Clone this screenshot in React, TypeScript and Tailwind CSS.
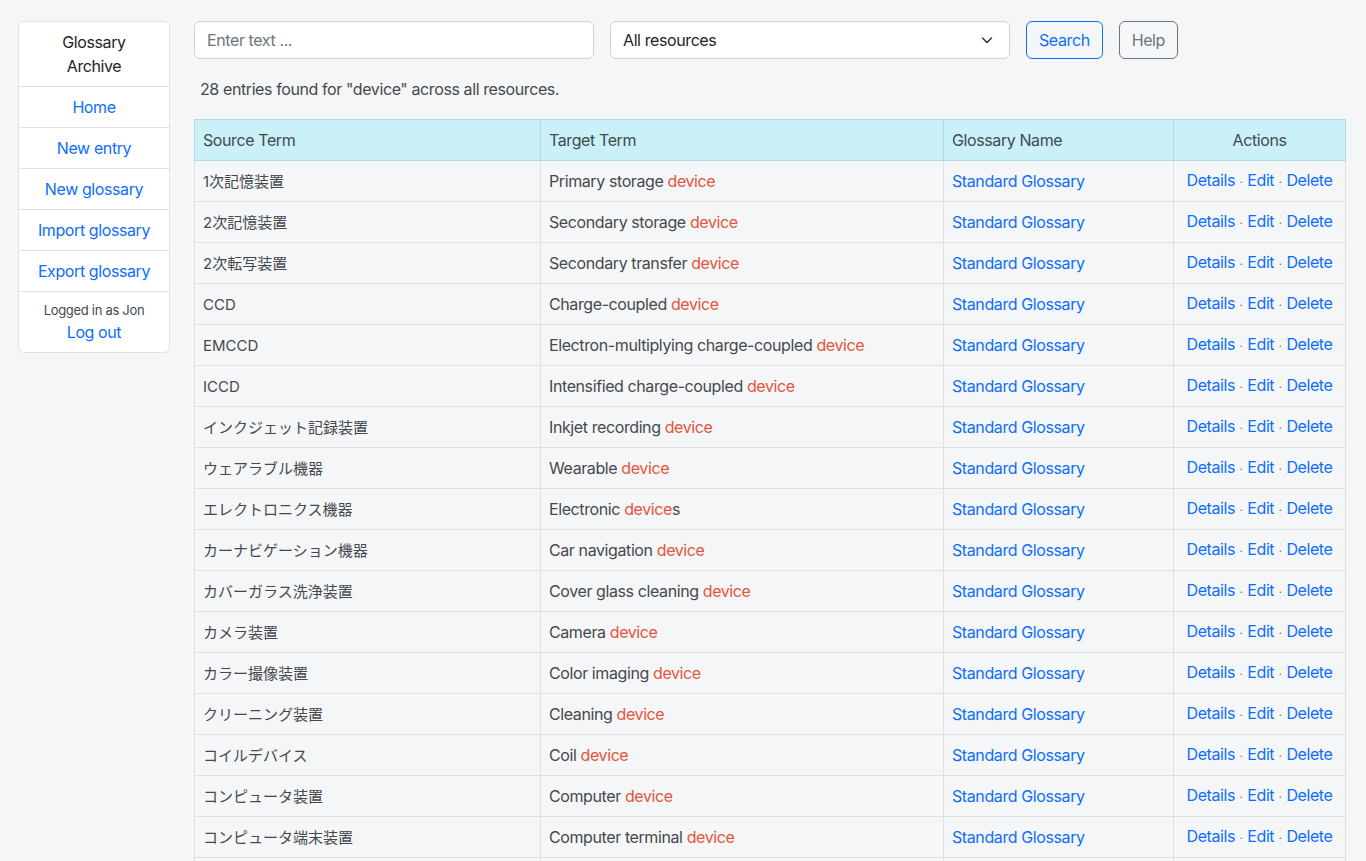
import React from "react";

type Row = { src: string; pre: string; post?: string };

const rows: Row[] = [
  { src: "1次記憶装置", pre: "Primary storage " },
  { src: "2次記憶装置", pre: "Secondary storage " },
  { src: "2次転写装置", pre: "Secondary transfer " },
  { src: "CCD", pre: "Charge-coupled " },
  { src: "EMCCD", pre: "Electron-multiplying charge-coupled " },
  { src: "ICCD", pre: "Intensified charge-coupled " },
  { src: "インクジェット記録装置", pre: "Inkjet recording " },
  { src: "ウェアラブル機器", pre: "Wearable " },
  { src: "エレクトロニクス機器", pre: "Electronic ", post: "s" },
  { src: "カーナビゲーション機器", pre: "Car navigation " },
  { src: "カバーガラス洗浄装置", pre: "Cover glass cleaning " },
  { src: "カメラ装置", pre: "Camera " },
  { src: "カラー撮像装置", pre: "Color imaging " },
  { src: "クリーニング装置", pre: "Cleaning " },
  { src: "コイルデバイス", pre: "Coil " },
  { src: "コンピュータ装置", pre: "Computer " },
  { src: "コンピュータ端末装置", pre: "Computer terminal " },
  { src: "コンピュータ周辺装置", pre: "Computer peripheral " },
];

const font = { fontFamily: 'Inter, "Noto Sans CJK JP", sans-serif' };

const td = "h-[41px] px-2 py-0 align-middle border border-[#dee2e6] leading-6";

function Dot() {
  return (
    <span className="tracking-normal">
      {" "}
      <span className="text-[#6c757d] text-[11px]">·</span>{" "}
    </span>
  );
}

export default function App() {
  return (
    <div
      className="min-h-screen bg-[#f5f6f8] text-[16px] leading-6 tracking-[-0.4px] text-[#45494d] flex gap-6 pl-[18px] pr-[21px] pt-[21px]"
      style={font}
    >
      <aside className="w-[152px] shrink-0 self-start bg-white border border-[#dee2e6] rounded-[6px] text-center">
        <div className="py-2 border-b border-[#dee2e6] text-[#212529]">
          Glossary
          <br />
          Archive
        </div>
        {["Home", "New entry", "New glossary", "Import glossary", "Export glossary"].map((t) => (
          <div key={t} className="py-2 border-b border-[#dee2e6] text-[#0d6efd]">
            {t}
          </div>
        ))}
        <div className="pt-[8px] pb-[8px]">
          <div className="text-[13px] leading-5 tracking-[-0.3px] text-[#45494d]">Logged in as Jon</div>
          <div className="text-[#0d6efd] leading-6">Log out</div>
        </div>
      </aside>
      <main className="flex-1 min-w-0">
        <div className="flex gap-4 items-center">
          <div className="w-[400px] h-[38px] bg-white border border-[#ced4da] rounded-[6px] px-3 flex items-center text-[#6c757d]">
            Enter text ...
          </div>
          <div className="w-[400px] h-[38px] bg-white border border-[#ced4da] rounded-[6px] px-3 flex items-center justify-between text-[#212529]">
            <span>All resources</span>
            <svg width="16" height="16" viewBox="0 0 16 16" className="mr-[2px]">
              <path d="M3.5 6l4.5 4.5L12.5 6" fill="none" stroke="#343a40" strokeWidth="1.6" strokeLinecap="round" strokeLinejoin="round" />
            </svg>
          </div>
          <div className="h-[38px] px-3 flex items-center border border-[#0d6efd] text-[#0d6efd] rounded-[6px]">
            Search
          </div>
          <div className="h-[38px] px-3 flex items-center border border-[#6c757d] text-[#6c757d] rounded-[6px]">
            Help
          </div>
        </div>
        <div className="mt-[18px] pl-[6px]">28 entries found for "device" across all resources.</div>
        <table className="mt-[18px] w-full border-collapse table-fixed">
          <colgroup>
            <col style={{ width: 346 }} />
            <col style={{ width: 403 }} />
            <col style={{ width: 230 }} />
            <col style={{ width: 172 }} />
          </colgroup>
          <thead>
            <tr className="bg-[#caf0f8]">
              <th className="h-[41px] font-normal text-left px-2 py-0 border border-[#b3dbe3]">Source Term</th>
              <th className="h-[41px] font-normal text-left px-2 py-0 border border-[#b3dbe3]">Target Term</th>
              <th className="h-[41px] font-normal text-left px-2 py-0 border border-[#b3dbe3]">Glossary Name</th>
              <th className="h-[41px] font-normal text-center px-2 py-0 border border-[#b3dbe3]">Actions</th>
            </tr>
          </thead>
          <tbody>
            {rows.map((r, i) => (
              <tr key={i}>
                <td className={td + " whitespace-nowrap"}>
                  <span className="text-[15px] leading-5 tracking-normal">{r.src}</span>
                </td>
                <td className={td + " whitespace-nowrap"}>
                  {r.pre}
                  <span className="text-[#e4553c]">device</span>
                  {r.post}
                </td>
                <td className={td + " text-[#0d6efd]"}>Standard Glossary</td>
                <td className={td + " text-center whitespace-nowrap"}>
                  <span className="text-[#0d6efd]">Details</span>
                  <Dot />
                  <span className="text-[#0d6efd]">Edit</span>
                  <Dot />
                  <span className="text-[#0d6efd]">Delete</span>
                </td>
              </tr>
            ))}
          </tbody>
        </table>
      </main>
    </div>
  );
}
